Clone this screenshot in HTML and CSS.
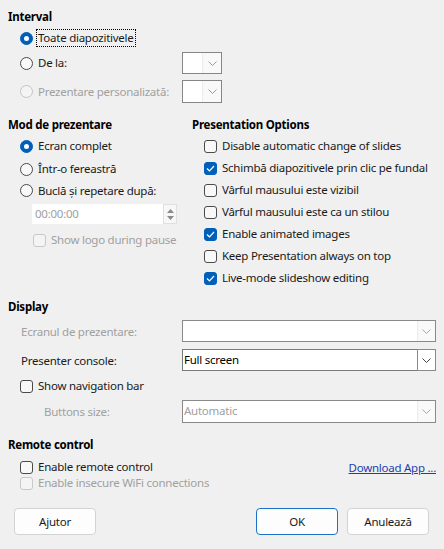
FILE: index.html
```html
<!DOCTYPE html>
<html lang="ro">
<head>
<meta charset="utf-8">
<title>Prezentare</title>
<link rel="stylesheet" href="styles.css">
</head>
<body>
<div class="dlg">
  <section class="sec-interval">
    <h2 class="hd">Interval</h2>
    <div class="row r1">
      <span class="radio on"></span><span class="lbl focus">Toate diapozitivele</span>
    </div>
    <div class="row r2">
      <span class="radio"></span><span class="lbl grow">De la:</span>
      <span class="spin"><span class="spin-txt"></span><span class="spin-btn"><svg width="9" height="5" viewBox="0 0 9 5"><polyline points="0.5,0.5 4.5,4.5 8.5,0.5" fill="none" stroke="#9a9a9a" stroke-width="1"/></svg></span></span>
    </div>
    <div class="row r3 dis">
      <span class="radio"></span><span class="lbl grow">Prezentare personalizată:</span>
      <span class="spin"><span class="spin-txt"></span><span class="spin-btn"><svg width="9" height="5" viewBox="0 0 9 5"><polyline points="0.5,0.5 4.5,4.5 8.5,0.5" fill="none" stroke="#9a9a9a" stroke-width="1"/></svg></span></span>
    </div>
  </section>

  <div class="cols">
    <section class="col-left">
      <h2 class="hd">Mod de prezentare</h2>
      <div class="row rl1"><span class="radio on"></span><span class="lbl">Ecran complet</span></div>
      <div class="row rl2"><span class="radio"></span><span class="lbl">Într-o fereastră</span></div>
      <div class="row rl3"><span class="radio"></span><span class="lbl">Buclă și repetare după:</span></div>
      <div class="timebox">
        <span class="time-txt">00:00:00</span>
        <span class="time-spin">
          <svg width="7" height="4" viewBox="0 0 7 4"><polygon points="0,4 3.5,0 7,4" fill="#8a8a8a"/></svg>
          <svg width="7" height="4" viewBox="0 0 7 4"><polygon points="0,0 3.5,4 7,0" fill="#8a8a8a"/></svg>
        </span>
      </div>
      <div class="row rl4 dis"><span class="check"></span><span class="lbl">Show logo during pause</span></div>
    </section>
    <section class="col-right">
      <h2 class="hd">Presentation Options</h2>
      <div class="row cr"><span class="check"></span><span class="lbl">Disable automatic change of slides</span></div>
      <div class="row cr"><span class="check on"><svg width="9" height="7" viewBox="0 0 9 7"><polyline points="1,3.5 3.5,6 8,1" fill="none" stroke="#fff" stroke-width="1.2"/></svg></span><span class="lbl">Schimbă diapozitivele prin clic pe fundal</span></div>
      <div class="row cr"><span class="check"></span><span class="lbl">Vârful mausului este vizibil</span></div>
      <div class="row cr"><span class="check"></span><span class="lbl">Vârful mausului este ca un stilou</span></div>
      <div class="row cr"><span class="check on"><svg width="9" height="7" viewBox="0 0 9 7"><polyline points="1,3.5 3.5,6 8,1" fill="none" stroke="#fff" stroke-width="1.2"/></svg></span><span class="lbl">Enable animated images</span></div>
      <div class="row cr"><span class="check"></span><span class="lbl">Keep Presentation always on top</span></div>
      <div class="row cr"><span class="check on"><svg width="9" height="7" viewBox="0 0 9 7"><polyline points="1,3.5 3.5,6 8,1" fill="none" stroke="#fff" stroke-width="1.2"/></svg></span><span class="lbl">Live-mode slideshow editing</span></div>
    </section>
  </div>

  <section class="sec-display">
    <h2 class="hd">Display</h2>
    <div class="frow fr1 dis">
      <span class="flbl">Ecranul de prezentare:</span>
      <span class="combo"><span class="combo-txt"></span><span class="combo-btn"><svg width="9" height="5" viewBox="0 0 9 5"><polyline points="0.5,0.5 4.5,4.5 8.5,0.5" fill="none" stroke="#a8a8a8" stroke-width="1"/></svg></span></span>
    </div>
    <div class="frow fr2">
      <span class="flbl">Presenter console:</span>
      <span class="combo act"><span class="combo-txt">Full screen</span><span class="combo-btn"><svg width="9" height="5" viewBox="0 0 9 5"><polyline points="0.5,0.5 4.5,4.5 8.5,0.5" fill="none" stroke="#444" stroke-width="1"/></svg></span></span>
    </div>
    <div class="row nav"><span class="check"></span><span class="lbl">Show navigation bar</span></div>
    <div class="frow fr3 dis">
      <span class="flbl sub">Buttons size:</span>
      <span class="combo"><span class="combo-txt">Automatic</span><span class="combo-btn"><svg width="9" height="5" viewBox="0 0 9 5"><polyline points="0.5,0.5 4.5,4.5 8.5,0.5" fill="none" stroke="#a8a8a8" stroke-width="1"/></svg></span></span>
    </div>
  </section>

  <section class="sec-remote">
    <h2 class="hd">Remote control</h2>
    <div class="row rm1"><span class="check"></span><span class="lbl grow">Enable remote control</span><a class="link" href="#">Download App ...</a></div>
    <div class="row rm2 dis"><span class="check"></span><span class="lbl">Enable insecure WiFi connections</span></div>
  </section>

  <div class="btns">
    <button class="btn">Ajutor</button>
    <span class="spacer"></span>
    <button class="btn def">OK</button>
    <button class="btn">Anulează</button>
  </div>
</div>
</body>
</html>
```

FILE: styles.css
```css
html, body {
  margin: 0;
  padding: 0;
  background: #f0f0f0;
}
body {
  width: 444px;
  height: 549px;
  overflow: hidden;
  font-family: "Noto Sans", "Open Sans", sans-serif;
  font-size: 11.5px;
  letter-spacing: -0.25px;
  color: #1a1a1a;
}
.dlg {
  padding: 9px 8px 0 8px;
}
.hd {
  margin: 0;
  font-size: 11.5px;
  font-weight: bold;
  line-height: 16px;
  height: 16px;
  color: #000;
}
.row {
  display: flex;
  align-items: center;
  height: 22px;
}
.lbl {
  line-height: 16px;
  white-space: nowrap;
}
.grow { flex: 1; }
.dis .lbl, .dis .flbl { color: #a0a0a0; }

.radio {
  box-sizing: border-box;
  width: 13px;
  height: 13px;
  border-radius: 50%;
  border: 1px solid #4a4a4a;
  background: #f8f8f8;
  flex: none;
  margin-right: 5px;
  position: relative;
}
.radio.on {
  background: #005fb8;
  border-color: #005fb8;
}
.radio.on::after {
  content: "";
  position: absolute;
  left: 3px; top: 3px;
  width: 5px; height: 5px;
  border-radius: 50%;
  background: #fff;
}
.dis .radio { border-color: #c4c4c4; background: #f4f4f4; }

.check {
  box-sizing: border-box;
  width: 13px;
  height: 13px;
  border-radius: 3px;
  border: 1px solid #4a4a4a;
  background: #f8f8f8;
  flex: none;
  margin-right: 5px;
  display: flex;
  align-items: center;
  justify-content: center;
}
.check.on { background: #005fb8; border-color: #005fb8; }
.dis .check { border-color: #c8c8c8; background: #f4f4f4; }

.focus {
  outline: 1px dotted #000;
  outline-offset: 0;
  padding: 0 1px;
  margin-left: -1px;
}

/* Interval */
.sec-interval .row { padding-left: 12px; }
.r1 { margin-top: 2px; }
.r2 { margin-top: 3px; }
.r3 { margin-top: 6px; height: 23px; }
.spin {
  box-sizing: border-box;
  width: 40px;
  height: 22px;
  border: 1px solid #868686;
  background: #fff;
  display: flex;
  margin-right: 214px;
}
.r3 .spin { height: 23px; }
.spin-txt { flex: 1; }
.spin-btn {
  width: 18px;
  background: #f9f9f9;
  border-left: 1px solid #ececec;
  display: flex;
  align-items: center;
  justify-content: center;
}

/* columns */
.cols {
  display: flex;
  margin-top: 14px;
}
.col-left { width: 184px; flex: none; }
.col-right { flex: 1; }
.col-left .row { padding-left: 12px; }
.col-right .row { padding-left: 12px; }
.rl1 { margin-top: 2px; }
.rl2 { margin-top: 1px; }
.rl3 { height: 21px; }
.timebox {
  display: flex;
  margin: 3px 0 0 24px;
  height: 20px;
  width: 145px;
}
.time-txt {
  box-sizing: border-box;
  width: 131px;
  height: 20px;
  background: #fff;
  color: #a0a0a0;
  line-height: 20px;
  padding-left: 3px;
}
.time-spin {
  box-sizing: border-box;
  width: 14px;
  height: 20px;
  border: 1px solid #e0e0e0;
  background: #f7f7f7;
  display: flex;
  flex-direction: column;
  align-items: center;
  justify-content: space-around;
  padding: 2px 0;
}
.col-left .rl4 { padding-left: 25px; margin-top: 5px; }
.col-right .cr:first-of-type { margin-top: 2px; }

/* display */
.sec-display { margin-top: 10px; }
.frow {
  display: flex;
  align-items: center;
  height: 22px;
}
.fr1 { margin-top: 5px; }
.fr2 { margin-top: 7px; }
.fr3 { margin-top: 3px; height: 23px; }
.flbl {
  width: 174px;
  flex: none;
  padding-left: 13px;
  box-sizing: border-box;
  white-space: nowrap;
}
.flbl.sub { padding-left: 36px; }
.combo {
  box-sizing: border-box;
  width: 254px;
  height: 100%;
  border: 1px solid #8a8a8a;
  background: #fff;
  display: flex;
}
.combo-txt {
  flex: 1;
  line-height: 20px;
  padding-left: 1px;
  color: #000;
}
.dis .combo-txt { color: #a0a0a0; }
.combo-btn {
  width: 17px;
  background: #f9f9f9;
  border-left: 1px solid #ececec;
  display: flex;
  align-items: center;
  justify-content: center;
}
.combo.act { border-color: #7a7a7a; }
.combo.act .combo-btn {
  background: #fff;
  border: 1px solid #8a8a8a;
  margin: -1px -1px -1px 0;
}
.sec-display .nav { padding-left: 12px; margin-top: 4px; }

/* remote */
.sec-remote { margin-top: 14px; }
.sec-remote .row { padding-left: 12px; height: 16px; }
.rm1 { margin-top: 6px; }
.link {
  color: #1c3fae;
  text-decoration: underline;
  margin-right: 0;
}

/* buttons */
.btns {
  display: flex;
  margin-top: 17px;
  padding: 0 7px 0 6px;
  gap: 9px;
}
.spacer { flex: 1; }
.btn {
  box-sizing: border-box;
  width: 82px;
  height: 27px;
  border: 1px solid #d3d3d3;
  border-radius: 4px;
  background: #fdfdfd;
  font-family: inherit;
  font-size: 11.5px;
  letter-spacing: -0.25px;
  color: #1a1a1a;
  padding: 0;
}
.btn.def { border-color: #1a73c8; }
```
